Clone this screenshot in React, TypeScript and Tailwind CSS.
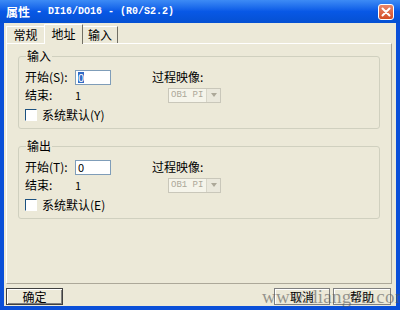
const ui = '"Noto Sans CJK SC", "Liberation Sans", sans-serif';

function GroupBox({ title, k1, k2 }: { title: string; k1: string; k2: string }) {
  return (
    <div className="relative h-[73px] rounded-[3px] border border-[#D0D0BF] px-[6px] pt-[11px]">
      <span className="absolute -top-[9px] left-[7px] bg-[#ECE9D8] px-[1px] text-[12px] leading-[16px]">
        {title}
      </span>
      <div className="flex h-[18px] items-center">
        <span className="w-[50px]">开始({k1}):</span>
        <div className="flex h-[15px] w-[36px] items-center border border-[#7F9DB9] bg-white pl-[2px] text-[11px] leading-none">
          {k1 === "S" ? <span className="bg-[#316AC5] text-white">0</span> : <span>0</span>}
        </div>
        <span className="ml-[41px]">过程映像:</span>
      </div>
      <div className="flex h-[18px] items-center">
        <span className="w-[50px]">结束:</span>
        <span className="w-[93px] text-[11px]">1</span>
        <div className="flex h-[15px] w-[53px] items-center justify-between border border-[#C9C7BA] bg-[#F5F4EA] pl-[2px] text-[9px] leading-none text-[#ACA899]">
          <span className="whitespace-nowrap" style={{ fontFamily: '"Liberation Mono", monospace' }}>
            OB1 PI
          </span>
          <div className="flex h-[13px] w-[14px] items-center justify-center border-l border-[#D8D6C8] bg-[#EAE8DC]">
            <div className="h-0 w-0 border-x-[3px] border-t-[4px] border-x-transparent border-t-[#ACA899]" />
          </div>
        </div>
      </div>
      <div className="mt-[2px] flex h-[18px] items-center">
        <div className="mr-[5px] h-[12px] w-[12px] border border-[#1C5180] border-r-white border-b-white bg-white" />
        <span>系统默认({k2})</span>
      </div>
    </div>
  );
}

export default function App() {
  return (
    <div
      className="relative flex h-[310px] w-[400px] flex-col bg-[#0A4FD8] text-[12px] text-black"
      style={{ fontFamily: ui }}
    >
      <div className="flex h-[23px] items-center justify-between bg-gradient-to-b from-[#3D8BF5] via-[#0858E6] to-[#0550D2] pl-[6px] pr-[6px] text-white">
        <div className="flex items-center whitespace-pre font-bold">
          <span className="text-[12px]">属性</span>
          <span className="text-[10px]" style={{ fontFamily: '"Liberation Mono", monospace' }}>
            {" - DI16/DO16 - (R0/S2.2)"}
          </span>
        </div>
        <div className="flex h-[16px] w-[16px] items-center justify-center rounded-[3px] border border-white bg-gradient-to-b from-[#E8856A] to-[#D34B22]">
          <svg width="10" height="10" viewBox="0 0 10 10">
            <path d="M1.5 1.5 L8.5 8.5 M8.5 1.5 L1.5 8.5" stroke="white" strokeWidth="2" strokeLinecap="round" />
          </svg>
        </div>
      </div>
      <div className="mx-[4px] mb-[4px] flex flex-1 flex-col bg-[#ECE9D8] pt-[1px]">
        <div className="ml-[2px] flex h-[19px] items-end">
          <div className="flex h-[17px] w-[38px] items-center justify-center border-l border-t border-white">常规</div>
          <div className="relative z-10 -mb-[1px] flex h-[20px] w-[39px] items-center justify-center border-x border-t border-l-white border-t-white border-r-[#716F64] bg-[#ECE9D8] pb-[2px]">
            地址
          </div>
          <div className="flex h-[17px] w-[35px] items-center justify-center border-r border-t border-t-white border-r-[#716F64]">输入</div>
        </div>
        <div className="ml-[2px] mr-[4px] h-[241px] border border-l-white border-t-white border-r-[#ACA899] border-b-[#ACA899] px-[11px] pt-[12px]">
          <GroupBox title="输入" k1="S" k2="Y" />
          <div className="mt-[17px]">
            <GroupBox title="输出" k1="T" k2="E" />
          </div>
        </div>
        <div className="mt-[4px] flex items-start">
          <button className="ml-[2px] h-[17px] w-[57px] border border-[#404040] bg-[#ECE9D8] text-[12px] leading-none shadow-[inset_1px_1px_0_#fff,inset_-1px_-1px_0_#808080]">
            确定
          </button>
          <div className="flex-1" />
          <button className="h-[17px] w-[56px] border border-[#808080] bg-[#ECE9D8] text-[12px] leading-none shadow-[inset_1px_1px_0_#fff]">
            取消
          </button>
          <button className="ml-[3px] mr-[5px] h-[17px] w-[58px] border border-[#808080] bg-[#ECE9D8] text-[12px] leading-none shadow-[inset_1px_1px_0_#fff]">
            帮助
          </button>
        </div>
      </div>
      <div
        className="pointer-events-none absolute left-[262px] top-[283px] whitespace-nowrap text-[19px] tracking-[0.3px] text-[#5A5A5A]/60"
        style={{ fontFamily: '"Liberation Serif", serif' }}
      >
        www.diangon.com
      </div>
    </div>
  );
}
